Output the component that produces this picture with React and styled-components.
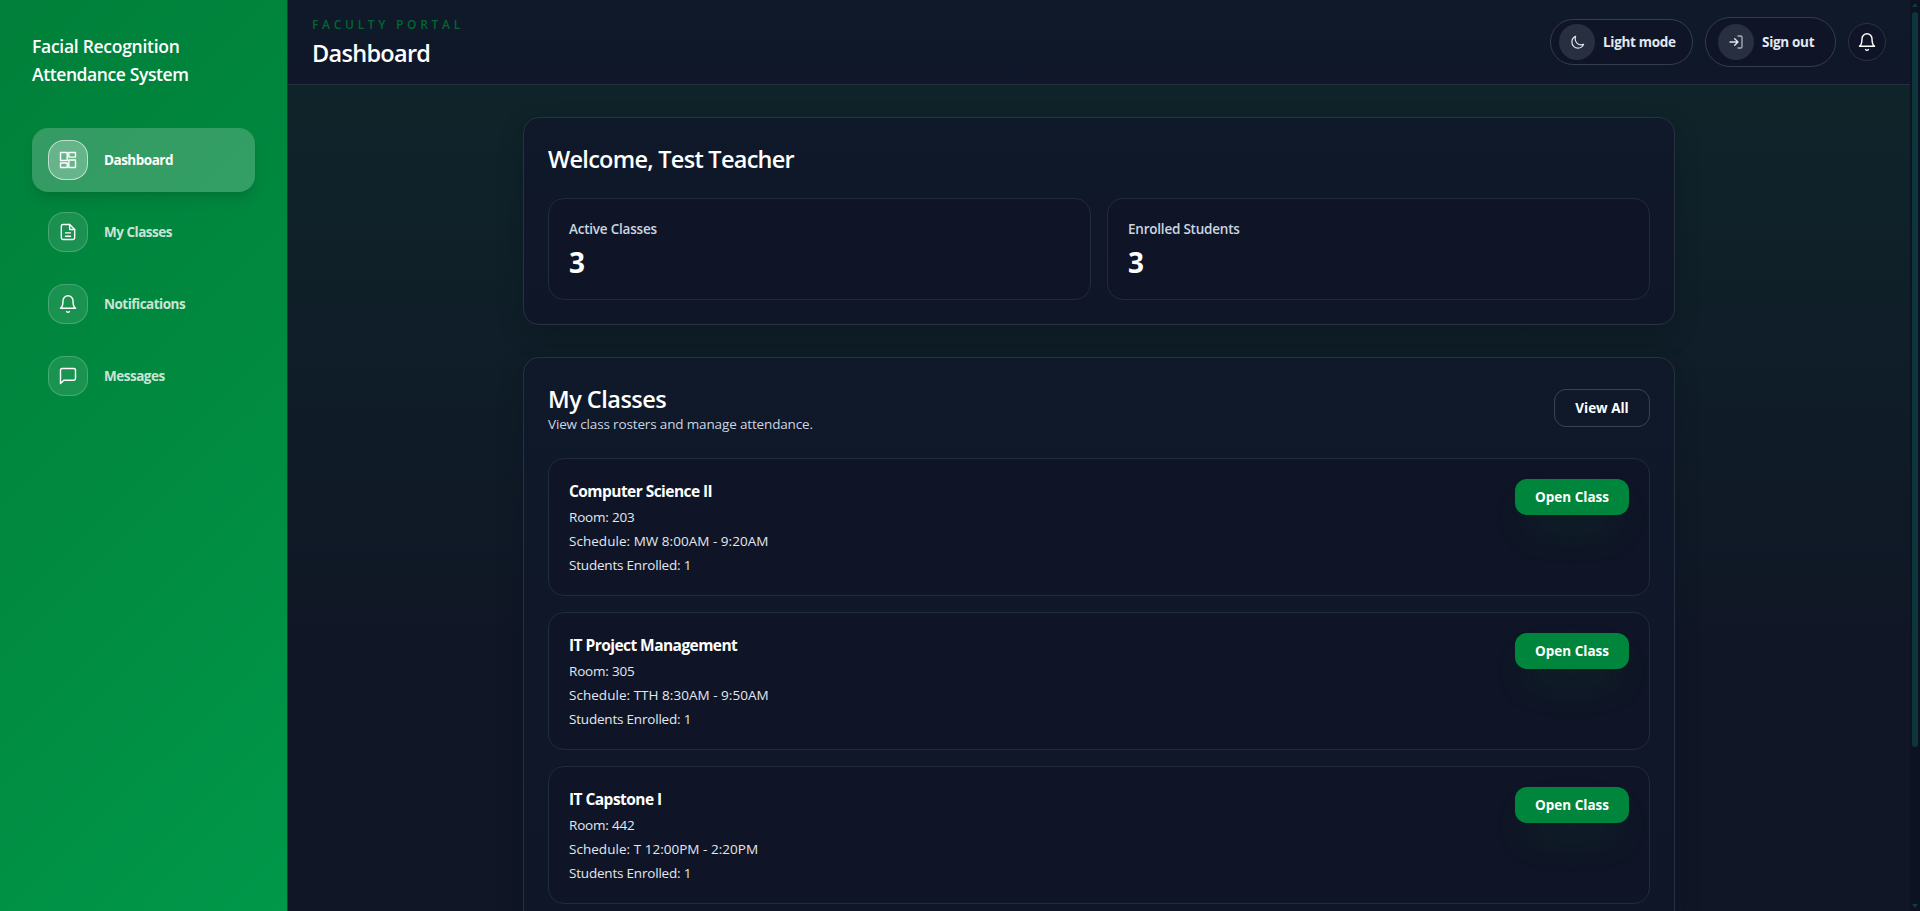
import React from "react";
import styled, { createGlobalStyle, css } from "styled-components";

const Global = createGlobalStyle`
  *, *::before, *::after { box-sizing: border-box; }
  body { margin: 0; height: 911px; overflow: hidden; background: #101624; color: #fff;
    font-family: "Open Sans", "Noto Sans", sans-serif; font-size: 14px; line-height: 20px; }
  h1, h2, h3, p { margin: 0; }
  button { font: inherit; color: inherit; cursor: pointer; }
`;

const Fit = styled.span`
  display: inline-block;
  white-space: nowrap;
  letter-spacing: ${(p) => p.$ls || 0}px;
`;

const Shell = styled.div`
  display: flex;
  width: 100%;
  height: 911px;
  overflow: hidden;
`;

const Sidebar = styled.aside`
  flex: 0 0 288px;
  display: flex;
  flex-direction: column;
  gap: 40px;
  padding: 32px;
  border-right: 1px solid #1b3a3c;
  background: linear-gradient(135deg, #00803a 0%, #008a40 50%, #00984a 100%);
`;

const Brand = styled.h1`
  font-size: 17.5px;
  line-height: 28px;
  font-weight: 600;
`;

const Nav = styled.nav`
  display: flex;
  flex-direction: column;
  gap: 8px;
`;

const NavItem = styled.a`
  display: flex;
  align-items: center;
  gap: 16px;
  height: 64px;
  padding: 0 16px;
  border-radius: 16px;
  font-size: 13.5px;
  font-weight: 700;
  color: rgba(255, 255, 255, 0.8);
  ${(p) => p.$active && css`
    color: #fff;
    background: rgba(255, 255, 255, 0.2);
    box-shadow: 0 10px 15px -3px rgba(0, 0, 0, 0.1), 0 4px 6px -4px rgba(0, 0, 0, 0.1);
  `}
`;

const NavIcon = styled.span`
  display: grid;
  place-items: center;
  width: 40px;
  height: 40px;
  border-radius: 16px;
  color: #fff;
  border: 1px solid rgba(255, 255, 255, ${(p) => (p.$active ? 0.6 : 0.2)});
  background: rgba(255, 255, 255, ${(p) => (p.$active ? 0.25 : 0.1)});
`;

const Content = styled.div`
  flex: 1;
  min-width: 0;
  display: flex;
  flex-direction: column;
  background: linear-gradient(180deg, #0f242a 85px, #0f1d28 390px, #101625 640px);
`;

const TopBar = styled.header`
  flex: 0 0 85px;
  display: flex;
  align-items: center;
  justify-content: space-between;
  padding: 0 24px;
  border-bottom: 1px solid #26313f;
  background: linear-gradient(180deg, #0f1a29, #0f172a);
`;

const Eyebrow = styled.p`
  height: 16px;
  padding-top: 1px;
  font-size: 12px;
  line-height: 16px;
  font-weight: 600;
  color: #016630;
  text-transform: uppercase;
`;

const PageTitle = styled.h2`
  margin-top: 4px;
  padding-top: 1px;
  height: 32px;
  font-size: 23.5px;
  line-height: 32px;
  font-weight: 600;
`;

const Actions = styled.div`
  display: flex;
  align-items: center;
  gap: 12px;
`;

const Pill = styled.button`
  display: flex;
  align-items: center;
  gap: 8px;
  width: ${(p) => p.$w}px;
  height: ${(p) => p.$h}px;
  padding: 0 0 0 ${(p) => p.$pad}px;
  border: 1px solid #343d4d;
  border-radius: 999px;
  background: #0f1527;
  font-size: 13.5px;
  font-weight: 700;
  color: #e2e8f0;
`;

const PillIcon = styled.span`
  display: grid;
  place-items: center;
  width: 36px;
  height: 36px;
  border-radius: 50%;
  background: #272f40;
`;

const RoundButton = styled.button`
  display: grid;
  place-items: center;
  width: 38px;
  height: 38px;
  padding: 0;
  border: 1px solid #2b3243;
  border-radius: 50%;
  background: #0f1527;
`;

const Main = styled.main`
  display: flex;
  flex-direction: column;
  gap: 32px;
  width: 1152px;
  margin: 32px auto 0;
`;

const Card = styled.section`
  display: flex;
  flex-direction: column;
  gap: 24px;
  padding: 24px;
  border: 1px solid #263241;
  border-radius: 16px;
  background: linear-gradient(180deg, #0f1929, #0f1628);
  box-shadow: 0 10px 24px rgba(8, 14, 24, 0.25);
`;

const CardHead = styled.div`
  display: flex;
  align-items: center;
  justify-content: space-between;
`;

const CardTitle = styled.h2`
  height: 32px;
  padding-top: 1px;
  font-size: 23.5px;
  line-height: 32px;
  font-weight: 600;
`;

const CardNote = styled.p`
  font-size: 13.5px;
  color: #cbd5e1;
`;

const Stats = styled.div`
  display: grid;
  grid-template-columns: 1fr 1fr;
  gap: 16px;
`;

const Stat = styled.div`
  padding: 20px;
  border: 1px solid #202c3b;
  border-radius: 16px;
  background: #0f1526;
`;

const StatLabel = styled.p`
  font-size: 13.5px;
  font-weight: 600;
  color: #cbd5e1;
`;

const StatValue = styled.p`
  height: 36px;
  margin-top: 4px;
  padding-top: 1px;
  font-size: 28px;
  line-height: 36px;
  font-weight: 700;
`;

const ClassList = styled.div`
  display: flex;
  flex-direction: column;
  gap: 16px;
`;

const ClassRow = styled.article`
  display: flex;
  align-items: flex-start;
  justify-content: space-between;
  padding: 20px;
  border: 1px solid #202c3b;
  border-radius: 16px;
  background: #0f1526;
`;

const ClassInfo = styled.div`
  display: flex;
  flex-direction: column;
  gap: 4px;
`;

const ClassName = styled.h3`
  font-size: 15.5px;
  line-height: 24px;
  font-weight: 700;
`;

const ClassMeta = styled.p`
  font-size: 13.5px;
  color: #e2e8f0;
`;

const Button = styled.button`
  width: ${(p) => (p.$primary ? 114 : 96)}px;
  height: ${(p) => (p.$primary ? 36 : 38)}px;
  padding: 0;
  border-radius: 12px;
  border: ${(p) => (p.$primary ? "0" : "1px solid #3b4352")};
  background: ${(p) => (p.$primary ? "#00863c" : "transparent")};
  box-shadow: ${(p) => (p.$primary ? "0 20px 40px -12px rgba(0, 166, 62, 0.21)" : "none")};
  font-size: 13.5px;
  font-weight: 700;
  color: #fff;
`;

const ScrollTrack = styled.div`
  flex: 0 0 10px;
  display: flex;
  flex-direction: column;
  align-items: center;
  padding: 3px 0;
  background: #0c1222;
`;

const ScrollArrow = styled.i`
  width: 6px;
  height: 4px;
  background: #0d3b40;
  clip-path: ${(p) => (p.$down ? "polygon(0 0, 100% 0, 50% 100%)" : "polygon(50% 0, 100% 100%, 0 100%)")};
`;

const ScrollThumb = styled.div`
  width: 6px;
  height: 735px;
  margin: 5px 0 auto;
  border-radius: 3px;
  background: #0d353c;
`;

const Svg = ({ size = 20, sw = 1.7, children }) => (
  <svg width={size} height={size} viewBox="0 0 24 24" fill="none" stroke="currentColor"
    strokeWidth={sw} strokeLinecap="round" strokeLinejoin="round">{children}</svg>
);

const BellIcon = (p) => (
  <Svg {...p}>
    <path d="M18 8a6 6 0 0 0-12 0c0 7-3 9-3 9h18s-3-2-3-9" />
    <path d="M13.73 21a2 2 0 0 1-3.46 0" />
  </Svg>
);
const GridIcon = () => (
  <Svg>
    <path d="M3 3h8v9.500H3zM13 3h8v5.500h-8zM13 12h8v9h-8zM3 15.500h8V21H3z" />
  </Svg>
);
const FileIcon = () => (
  <Svg>
    <path d="M14 3H6a2 2 0 0 0-2 2v14a2 2 0 0 0 2 2h12a2 2 0 0 0 2-2V9z" />
    <path d="M14 3v6h6M9 13h6M9 17h6" />
  </Svg>
);
const ChatIcon = () => (
  <Svg>
    <path d="M21 15a2 2 0 0 1-2 2H7l-4 4V5a2 2 0 0 1 2-2h14a2 2 0 0 1 2 2z" />
  </Svg>
);
const MoonIcon = () => (
  <Svg size={15} sw={1.9}>
    <path d="M21.752 15.002A9.718 9.718 0 0 1 18 15.750c-5.385 0-9.750-4.365-9.750-9.750 0-1.330.266-2.597.748-3.752A9.753 9.753 0 0 0 3 11.250C3 16.635 7.365 21 12.750 21a9.753 9.753 0 0 0 9.002-5.998Z" />
  </Svg>
);
const SignOutIcon = () => (
  <Svg size={16} sw={2}>
    <path d="M15 3h4a2 2 0 0 1 2 2v14a2 2 0 0 1-2 2h-4" opacity="0.7" />
    <path d="M10 17l5-5-5-5M15 12H3" />
  </Svg>
);

const NAV = [
  { label: "Dashboard", icon: <GridIcon />, active: true },
  { label: "My Classes", icon: <FileIcon /> },
  { label: "Notifications", icon: <BellIcon /> },
  { label: "Messages", icon: <ChatIcon /> },
];

const CLASSES = [
  { name: "Computer Science II", room: "203", schedule: "MW 8:00AM - 9:20AM" },
  { name: "IT Project Management", room: "305", schedule: "TTH 8:30AM - 9:50AM" },
  { name: "IT Capstone I", room: "442", schedule: "T 12:00PM - 2:20PM" },
];

export default function App() {
  return (
    <>
      <Global />
      <Shell>
        <Sidebar>
          <Brand>
            <Fit $ls={-0.28}>Facial Recognition</Fit><br /><Fit $ls={-0.4}>Attendance System</Fit>
          </Brand>
          <Nav>
            {NAV.map((n) => (
              <NavItem key={n.label} $active={n.active}>
                <NavIcon $active={n.active}>{n.icon}</NavIcon>
                <Fit $ls={-0.5}>{n.label}</Fit>
              </NavItem>
            ))}
          </Nav>
        </Sidebar>
        <Content>
          <TopBar>
            <div>
              <Eyebrow><Fit $ls={3.7}>Faculty Portal</Fit></Eyebrow>
              <PageTitle><Fit $ls={-0.7}>Dashboard</Fit></PageTitle>
            </div>
            <Actions>
              <Pill $w={143} $h={46} $pad={8}><PillIcon><MoonIcon /></PillIcon><Fit $ls={-0.3}>Light mode</Fit></Pill>
              <Pill $w={131} $h={50} $pad={12}><PillIcon><SignOutIcon /></PillIcon><Fit $ls={-0.3}>Sign out</Fit></Pill>
              <RoundButton><BellIcon /></RoundButton>
            </Actions>
          </TopBar>
          <Main>
            <Card>
              <CardTitle><Fit $ls={-0.72}>Welcome, Test Teacher</Fit></CardTitle>
              <Stats>
                <Stat><StatLabel><Fit $ls={-0.22}>Active Classes</Fit></StatLabel><StatValue>3</StatValue></Stat>
                <Stat><StatLabel><Fit $ls={-0.22}>Enrolled Students</Fit></StatLabel><StatValue>3</StatValue></Stat>
              </Stats>
            </Card>
            <Card>
              <CardHead>
                <div>
                  <CardTitle><Fit $ls={-0.5}>My Classes</Fit></CardTitle>
                  <CardNote><Fit $ls={-0.15}>View class rosters and manage attendance.</Fit></CardNote>
                </div>
                <Button>View All</Button>
              </CardHead>
              <ClassList>
                {CLASSES.map((c) => (
                  <ClassRow key={c.name}>
                    <ClassInfo>
                      <ClassName><Fit $ls={-0.55}>{c.name}</Fit></ClassName>
                      <ClassMeta><Fit $ls={-0.2}>Room: {c.room}</Fit></ClassMeta>
                      <ClassMeta><Fit $ls={0.03}>Schedule: {c.schedule}</Fit></ClassMeta>
                      <ClassMeta><Fit $ls={-0.2}>Students Enrolled: 1</Fit></ClassMeta>
                    </ClassInfo>
                    <Button $primary>Open Class</Button>
                  </ClassRow>
                ))}
              </ClassList>
            </Card>
          </Main>
        </Content>
        <ScrollTrack>
          <ScrollArrow />
          <ScrollThumb />
          <ScrollArrow $down />
        </ScrollTrack>
      </Shell>
    </>
  );
}
